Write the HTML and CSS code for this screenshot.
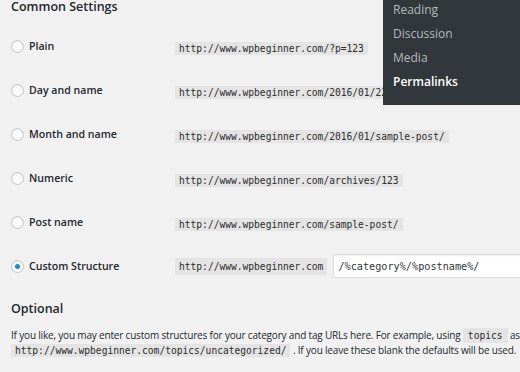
FILE: index.html
```html
<!DOCTYPE html>
<html lang="en">
<head>
	<meta charset="UTF-8">
	<title>Permalink Settings</title>
	<link rel="stylesheet" href="styles.css">
</head>
<body>
	<div class="wrap">
		<h2 class="title">Common Settings</h2>
		<table class="form-table">
			<tr>
				<th><label><span class="radio"></span>Plain</label></th>
				<td><code>http://www.wpbeginner.com/?p=123</code></td>
			</tr>
			<tr>
				<th><label><span class="radio"></span>Day and name</label></th>
				<td><code>http://www.wpbeginner.com/2016/01/22/sample-post/</code></td>
			</tr>
			<tr>
				<th><label><span class="radio"></span>Month and name</label></th>
				<td><code>http://www.wpbeginner.com/2016/01/sample-post/</code></td>
			</tr>
			<tr>
				<th><label><span class="radio"></span>Numeric</label></th>
				<td><code>http://www.wpbeginner.com/archives/123</code></td>
			</tr>
			<tr>
				<th><label><span class="radio"></span>Post name</label></th>
				<td><code>http://www.wpbeginner.com/sample-post/</code></td>
			</tr>
			<tr>
				<th><label><span class="radio checked"></span>Custom Structure</label></th>
				<td class="custom">
					<code>http://www.wpbeginner.com</code>
					<input class="regular-text" type="text" value="/%category%/%postname%/">
				</td>
			</tr>
		</table>

		<h2 class="title optional">Optional</h2>
		<p class="desc">If you like, you may enter custom structures for your category and tag URLs here. For example, using <code class="big">topics</code> as your category base would make your category links like <code>http://www.wpbeginner.com/topics/uncategorized/</code> . If you leave these blank the defaults will be used.</p>
	</div>

	<ul class="submenu">
		<li>Reading</li>
		<li>Discussion</li>
		<li>Media</li>
		<li class="current">Permalinks</li>
	</ul>
</body>
</html>
```

FILE: styles.css
```css
* {
    padding: 0;
    margin: 0;
    box-sizing: border-box;
}

html, body {
    background: #f1f1f1;
    overflow: hidden;
}

body {
    font-family: "Open Sans", "Liberation Sans", sans-serif;
    color: #23282d;
    width: 520px;
    height: 372px;
    position: relative;
}

.wrap {
    padding: 0 0 0 11px;
    width: 820px;
}

.title {
    font-size: 12.5px;
    font-weight: 600;
    line-height: 14px;
}

.form-table {
    border-collapse: collapse;
    margin-top: 10px;
}

.form-table th,
.form-table td {
    height: 44px;
    padding: 0;
    vertical-align: middle;
    text-align: left;
}

.form-table th {
    width: 164px;
    font-size: 10.6px;
    font-weight: 600;
}

.form-table label {
    display: flex;
    align-items: center;
    gap: 5px;
}

.radio {
    width: 13px;
    height: 13px;
    border-radius: 50%;
    border: 1px solid #c3c6c9;
    background: #fbfbfb;
    box-shadow: inset 0 1px 2px rgba(0, 0, 0, 0.08);
    display: flex;
    align-items: center;
    justify-content: center;
}

.radio.checked::before {
    content: "";
    width: 5px;
    height: 5px;
    border-radius: 50%;
    background: #1e8cbe;
}

code {
    font-family: "DejaVu Sans Mono", "Liberation Mono", monospace;
    font-size: 9.6px;
    line-height: 15px;
    background: #e4e4e4;
    color: #2c2c2c;
    padding: 1px 4px;
    white-space: nowrap;
}

.custom {
    display: flex;
    align-items: center;
    gap: 6px;
}

.regular-text {
    width: 200px;
    height: 24px;
    border: 1px solid #dddddd;
    background: #fff;
    box-shadow: inset 0 1px 2px rgba(0, 0, 0, 0.07);
    font-family: "DejaVu Sans Mono", "Liberation Mono", monospace;
    font-size: 10.2px;
    color: #32373c;
    padding: 0 4px;
    outline: none;
}

.optional {
    margin-top: 14px;
}

.desc {
    font-size: 10px;
    line-height: 15px;
    margin-top: 12px;
    width: 790px;
    letter-spacing: -0.18px;
}

.desc code {
    padding: 1px 4px;
    letter-spacing: 0;
}

.desc code.big {
    padding: 2px 5px;
}

.submenu {
    position: absolute;
    top: 0;
    left: 383px;
    width: 137px;
    height: 105px;
    background: #32373c;
    list-style: none;
    padding: 0 0 0 10px;
}

.submenu li {
    font-size: 12px;
    line-height: 24px;
    color: #b4b9be;
}

.submenu li:first-child {
    margin-top: -2px;
}

.submenu li.current {
    color: #fff;
    font-weight: 600;
}
```
